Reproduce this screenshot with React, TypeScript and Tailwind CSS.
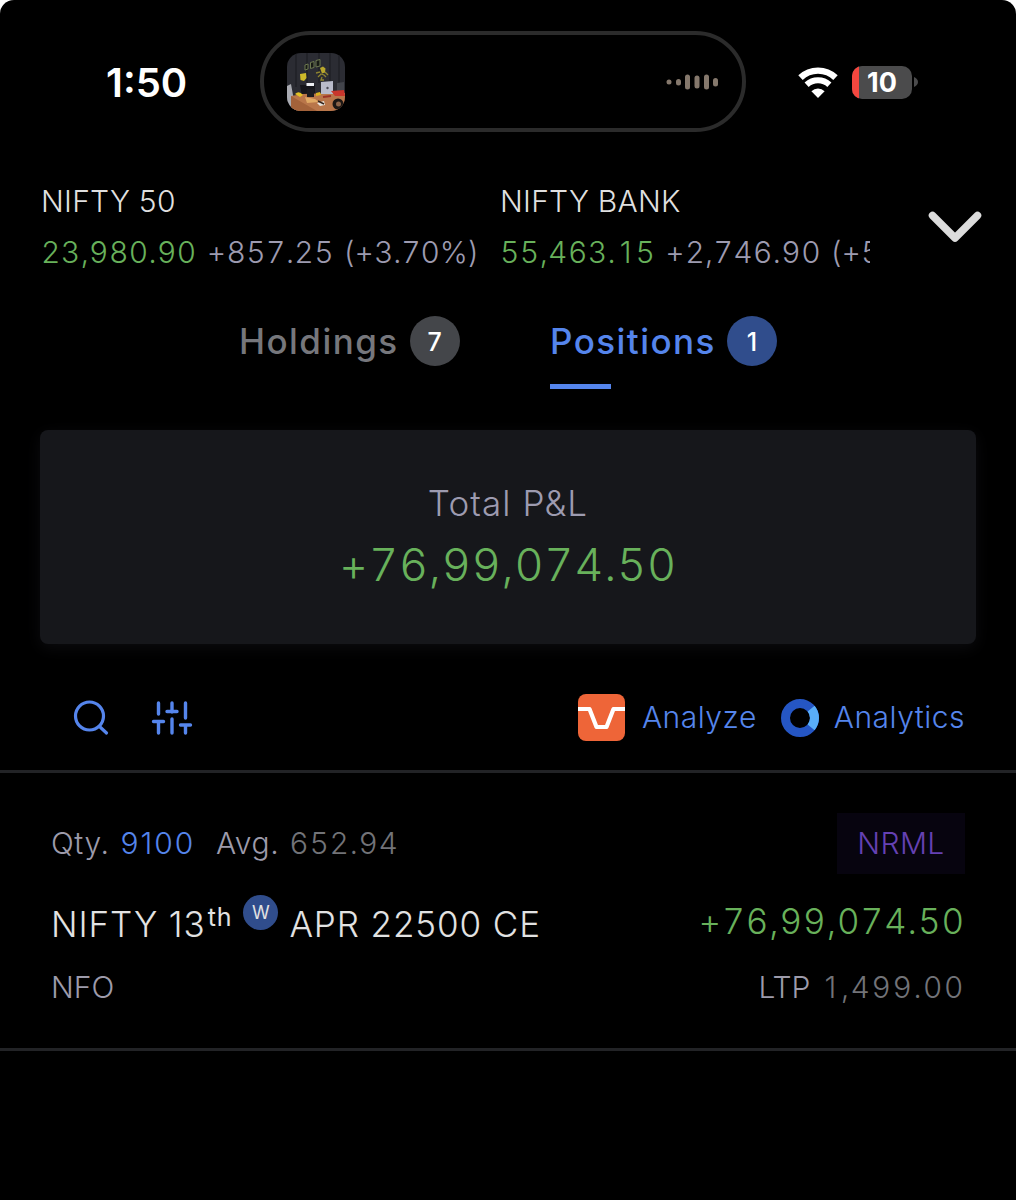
import { clsx } from "clsx";

type IndexQuote = {
  name: string;
  price: string;
  change: string;
  percent: string;
};

const indices: IndexQuote[] = [
  { name: "NIFTY 50", price: "23,980.90", change: "+857.25", percent: "(+3.70%)" },
  { name: "NIFTY BANK", price: "55,463.15", change: "+2,746.90", percent: "(+5" },
];

// Tabular figures, but with the plain "1" centred in its slot instead of the footed one
function Figures({ value, className }: { value: string; className?: string }) {
  return (
    <span className={clsx("tabular-nums", className)}>
      {value.split("").map((ch, i) =>
        ch === "1" ? (
          <span key={i} className="inline-block w-[0.650em] text-center normal-nums">
            1
          </span>
        ) : (
          ch
        )
      )}
    </span>
  );
}

function NowPlayingArt() {
  return (
    <svg viewBox="0 0 58 58" className="h-[58px] w-[58px] rounded-[14px]">
      <rect width="58" height="58" fill="#2b2c33" />
      <path d="M9 0v34M20 0v30M32 0v30M43 0v32M52 0v34" stroke="#202127" strokeWidth="1.5" />
      <path d="M18 12l3-1v5l-3 1zM23.500 9.500l3.500-1v6l-3.500 1zM29 7.500l4-1v6.500l-4 1z" fill="#171a16" stroke="#6d7850" />
      <path d="M13 21l6-1 .5 5-2.500 3-3.500-1z" fill="#cdb92a" />
      <path d="M29 20l4-1M38 19l3 3M31 24l3-3 3 1 2 2M35 24l-1 3h3" stroke="#8d8330" strokeWidth="1.300" fill="none" />
      <path d="M33 15l3-1.500 2.500 2-.5 4-3 1z" fill="#b8a62c" />
      <path d="M0 33l4-2 2 11 4 16H0z" fill="#a9abb2" />
      <path d="M13 32h15v11H15z" fill="#15161b" />
      <path d="M19.500 30h7.500v3h-7.500z" fill="#eceef2" />
      <path d="M50 30l7-1v8l-7 1z" fill="#42444b" />
      <path d="M4 43l12-2 30-1 12 0v18H4z" fill="#b9764a" />
      <path d="M4 43l26 15H4z" fill="#a3623a" />
      <path d="M18 44l10 2 4 3-12 1z" fill="#e0a965" />
      <path d="M8 41q4-4 8 1l-3 2z" fill="#e3c326" />
      <path d="M20 36h7v8h-7z" fill="#1a1b20" />
      <path d="M34 29l12-1 0 13-12 0z" fill="#b9bbca" />
      <circle cx="40.500" cy="35" r="1.200" fill="#4b4d58" />
      <path d="M29 40l4-1 1 3-5 1z" fill="#d8b21f" />
      <path d="M44 38l13-1 1 6-10 0z" fill="#c9362c" />
      <path d="M30 50l7-2 1 4-5 1z" fill="#e9e4dc" />
      <path d="M31 48l6 3" stroke="#33241c" strokeWidth="1.500" />
      <path d="M36 44l8-1" stroke="#9c3326" strokeWidth="2" />
      <circle cx="51" cy="51" r="5.500" fill="#1c1715" />
      <circle cx="51.500" cy="51" r="2.500" fill="#8a6248" />
    </svg>
  );
}

function Waveform() {
  return (
    <svg viewBox="0 0 54 16" className="h-4 w-[54px]" fill="#85786c">
      <circle cx="4" cy="8" r="2.500" />
      <rect x="11" y="5" width="5" height="6.500" rx="2.500" />
      <rect x="20" y="0.500" width="5" height="15" rx="2.500" />
      <rect x="29.500" y="1.500" width="5" height="13" rx="2.500" />
      <rect x="39" y="0.500" width="5" height="15" rx="2.500" />
      <rect x="48" y="4" width="5" height="8.500" rx="2.500" />
    </svg>
  );
}

function WifiIcon() {
  return (
    <svg viewBox="0 0 40 31" className="h-[31px] w-10" fill="none" stroke="#fff">
      <path d="M2.500 10.600a25.500 25.500 0 0 1 35 0" strokeWidth="6.400" />
      <path d="M8.600 17.700a16.700 16.700 0 0 1 22.800 0" strokeWidth="6" />
      <path d="M20 31l-6.600-6.800a9.500 9.500 0 0 1 13.200 0z" fill="#fff" stroke="none" />
    </svg>
  );
}

function Battery() {
  return (
    <div className="flex items-center">
      <div className="relative flex h-[33px] w-[60px] items-center justify-center overflow-hidden rounded-[10px] bg-[#4b4b4c]">
        <div className="absolute inset-y-0 left-0 w-[7px] bg-[#f4473f]" />
        <span className="text-[27px] font-bold leading-none text-white">10</span>
      </div>
      <svg viewBox="0 0 4 10" className="ml-[2px] h-[10px] w-1">
        <path d="M0 0q4 2 4 5t-4 5z" fill="#4b4b4c" />
      </svg>
    </div>
  );
}

function StatusBar() {
  return (
    <div className="flex h-[162px] items-start pt-[31px] [font-optical-sizing:auto]">
      <div className="flex h-[103px] w-[260px] items-center pl-[106px]">
        <span className="text-[40px] font-semibold leading-none text-white">1:50</span>
      </div>
      <div className="flex h-[101px] w-[486px] shrink-0 items-center justify-between rounded-full border-4 border-[#2b2b2b] pl-[23px] pr-[23px]">
        <NowPlayingArt />
        <Waveform />
      </div>
      <div className="flex h-[102px] items-center pl-[52px]">
        <WifiIcon />
        <div className="ml-[14px]">
          <Battery />
        </div>
      </div>
    </div>
  );
}

function IndexCell({ quote }: { quote: IndexQuote }) {
  return (
    <div className="w-[459px] shrink-0 whitespace-nowrap">
      <div className="h-[51px] text-[30px] leading-[51px] tracking-[0.250px] text-[#dfdfdf]">{quote.name}</div>
      <div className="flex h-[51px] gap-[10px] text-[30px] leading-[51px] tracking-[0.400px] text-[#9d9bb0]">
        <Figures value={quote.price} className="text-[#68b15b]" />
        <Figures value={quote.change} />
        <Figures value={quote.percent} className="-ml-px tracking-[-0.100px]" />
      </div>
    </div>
  );
}

function IndexBar() {
  return (
    <div className="flex h-[138px] pl-[41px] pt-[14px]">
      <div className="flex w-[829px] overflow-hidden font-light">
        {indices.map((q) => (
          <IndexCell key={q.name} quote={q} />
        ))}
      </div>
      <svg viewBox="0 0 54 32" className="ml-[58px] mt-[35px] h-8 w-[54px]" fill="none">
        <path d="M4.500 4.500L27 27L49.500 4.500" stroke="#dcdcdc" strokeWidth="7.500" strokeLinecap="round" strokeLinejoin="round" />
      </svg>
    </div>
  );
}

function Tab({ label, count, active }: { label: string; count: number; active?: boolean }) {
  return (
    <div className="flex flex-col">
      <div className="flex h-[50px] items-center gap-[11px]">
        <span
          className={clsx(
            "text-[35px] font-medium leading-none tracking-[1.450px]",
            active ? "text-[#5585ec]" : "text-[#76777c]"
          )}
        >
          {label}
        </span>
        <span
          className={clsx(
            "flex h-[50px] w-[50px] items-center justify-center rounded-full pt-px text-[25px] font-medium leading-[50px] text-white",
            active ? "bg-[#304d8c]" : "bg-[#44464a]"
          )}
        >
          {count}
        </span>
      </div>
      {active && <div className="mt-[18px] h-[5px] w-[61px] bg-[#5585ec]" />}
    </div>
  );
}

function SearchIcon() {
  return (
    <svg viewBox="0 0 36 36" className="h-9 w-9" fill="none" stroke="#5585ec" strokeWidth="3.200" strokeLinecap="round">
      <circle cx="16.500" cy="16" r="14" />
      <path d="M26.500 26.500L33.500 33" />
    </svg>
  );
}

function SlidersIcon() {
  return (
    <svg viewBox="0 0 42 36" className="h-9 w-[42px]" stroke="#5585ec" strokeWidth="3.400" strokeLinecap="round">
      <path d="M7.500 3v11M7.500 22v11M2.500 21.500h10M21 3v9M16 11.500h10M21 19v14M34.500 3v15M34.500 25v8M29.500 25h10" />
    </svg>
  );
}

function AnalyzeLogo() {
  return (
    <svg viewBox="0 0 47 47" className="h-[47px] w-[47px]">
      <rect width="47" height="47" rx="8" fill="#ee6538" />
      <path d="M0 15h11.500L18.500 33h10L35.500 15H47" fill="none" stroke="#fff" strokeWidth="4.200" strokeLinejoin="round" />
    </svg>
  );
}

function AnalyticsLogo() {
  return (
    <svg viewBox="0 0 38 38" className="h-[38px] w-[38px]" fill="none" strokeWidth="9">
      <circle cx="19" cy="19" r="14.500" stroke="#2556c4" />
      <path d="M30.100 9.700A14.500 14.500 0 0 1 30.100 28.300" stroke="#59aef8" />
    </svg>
  );
}

function Toolbar() {
  return (
    <div className="flex h-[129px] items-center border-b-[3px] border-[#222326] pl-[73px] pt-[21px] text-[30px] font-light tracking-[0.500px] text-[#5585ec]">
      <SearchIcon />
      <div className="ml-[42px]">
        <SlidersIcon />
      </div>
      <div className="ml-auto flex items-center pr-[51px]">
        <AnalyzeLogo />
        <span className="ml-[17px]">Analyze</span>
        <div className="ml-[24px]">
          <AnalyticsLogo />
        </div>
        <span className="ml-[15px]">Analytics</span>
      </div>
    </div>
  );
}

function PositionRow() {
  return (
    <div className="h-[278px] border-b-[3px] border-[#222326] pl-[51px] pr-[51px] pt-[40px] font-light text-[#9d9bab]">
      <div className="flex h-[61px] items-center justify-between text-[30px]">
        <div className="flex tracking-[0.600px]">
          <span>Qty.</span>
          <span className="ml-[11px] tracking-[1.900px] text-[#5585ec]">9100</span>
          <span className="ml-[21px]">Avg.</span>
          <Figures value="652.94" className="ml-[10px] tracking-[0.700px] text-[#727378]" />
        </div>
        <div className="flex h-[61px] w-[128px] items-center justify-center bg-[#07040f] tracking-[0.400px] text-[#6541b3]">
          NRML
        </div>
      </div>
      <div className="flex h-[95px] items-center justify-between">
        <div className="flex items-center pt-[6px] text-[35px] tracking-[0.900px] text-[#e2e2e2]">
          <span>NIFTY 13</span>
          <span className="mb-[15px] ml-[2px] text-[25px] font-normal leading-none">th</span>
          <span className="mb-[24px] ml-[11px] flex h-[35px] w-[35px] items-center justify-center rounded-full bg-[#304d8c] text-[18px] font-normal tracking-normal">
            W
          </span>
          <span className="ml-[11px]">APR 22500 CE</span>
        </div>
        <Figures value="+76,99,074.50" className="text-[35px] tracking-[0.900px] text-[#68b15b]" />
      </div>
      <div className="flex h-[37px] items-center justify-between text-[30px]">
        <span>NFO</span>
        <div className="flex">
          <span>LTP</span>
          <Figures value="1,499.00" className="ml-[11px] tracking-[1.550px] text-[#727378]" />
        </div>
      </div>
    </div>
  );
}

export default function App() {
  return (
    <div className="h-[1200px] w-[1016px] bg-white">
      <div className="h-full overflow-hidden rounded-t-[14px] bg-black font-['Inter',sans-serif] [font-optical-sizing:none]">
        <StatusBar />
        <IndexBar />
        <div className="flex h-[130px] items-start pl-[239px] pt-[16px]">
          <div className="w-[311px]">
            <Tab label="Holdings" count={7} />
          </div>
          <Tab label="Positions" count={1} active />
        </div>
        <div className="mx-[40px] flex h-[214px] flex-col items-center rounded-[8px] bg-[#16171b] pt-[48px] font-light shadow-[0_4px_16px_#0c0c0f]">
          <div className="text-[35px] leading-[50px] tracking-[1.100px] text-[#9d9bb0]">Total P&amp;L</div>
          <Figures value="+76,99,074.50" className="mt-[4px] text-[45px] leading-[66px] tracking-[0.800px] text-[#68b15b]" />
        </div>
        <Toolbar />
        <PositionRow />
      </div>
    </div>
  );
}
